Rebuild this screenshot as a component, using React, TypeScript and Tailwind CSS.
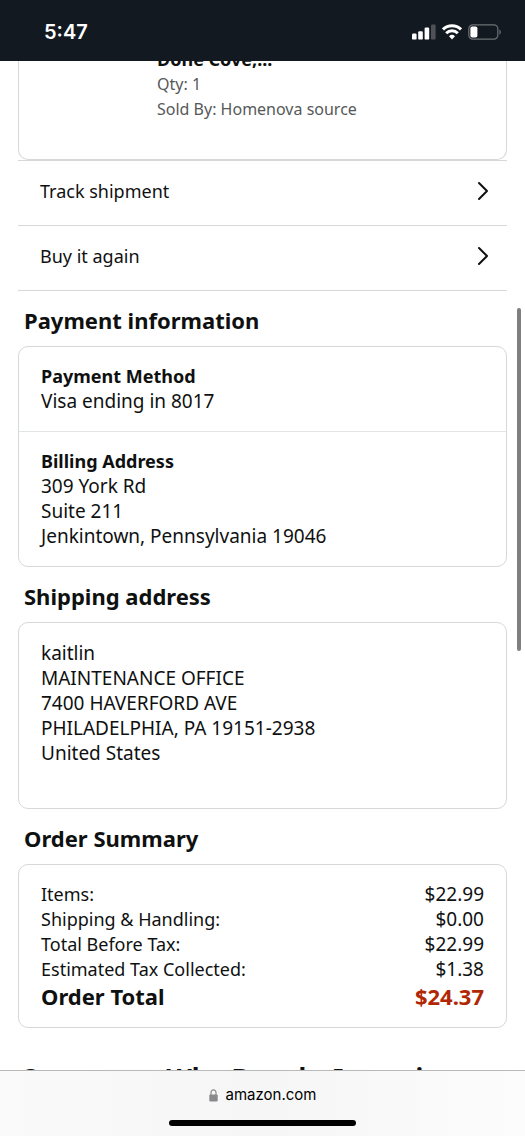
import React from "react";

type RowLinkProps = {
  label: string;
};

type CardProps = {
  title: string;
  children: React.ReactNode;
};

const charges = [
  { label: "Items:", amount: "$22.99" },
  { label: "Shipping & Handling:", amount: "$0.00" },
  { label: "Total Before Tax:", amount: "$22.99" },
  { label: "Estimated Tax Collected:", amount: "$1.38" },
];

const StatusBar = () => (
  <header className="flex h-[61px] shrink-0 items-center justify-between bg-[#131921] pt-0.5 pr-[23px] pl-11 font-['Inter',sans-serif] text-white">
    <span className="text-xl leading-6 font-semibold">5:47</span>
    <div className="flex items-center gap-1.5">
      <svg width="24" height="16" viewBox="0 0 24 16" fill="currentColor">
        <rect x="0" y="9.6" width="4.6" height="6" rx="1.2" />
        <rect x="6.2" y="7.2" width="4.6" height="8.4" rx="1.2" />
        <rect x="12.6" y="3.6" width="4.6" height="12" rx="1.2" />
        <rect x="19" y="0.5" width="4.6" height="15.1" rx="1.2" opacity="0.25" />
      </svg>
      <svg width="20" height="16" viewBox="0 0 20 16" fill="none" stroke="currentColor" strokeWidth="3">
        <path d="M1 5.4a12.8 12.8 0 0 1 18 0" />
        <path d="M4.2 9.2a8.2 8.2 0 0 1 11.6 0" />
        <path d="M10 15.4 7 12.3a4.3 4.3 0 0 1 6 0z" fill="currentColor" stroke="none" />
      </svg>
      <svg width="34" height="16" viewBox="0 0 34 16" fill="none">
        <rect x="0.8" y="0.8" width="29" height="14.4" rx="4" stroke="#6d7176" strokeWidth="1.2" />
        <rect x="2.4" y="2.4" width="7" height="11.2" rx="1.8" fill="white" />
        <path d="M31.4 5.4c1.8.7 1.8 4.5 0 5.2z" fill="#6d7176" />
      </svg>
    </div>
  </header>
);

const RowLink = ({ label }: RowLinkProps) => (
  <li className="border-b border-[#d5d9d9]">
    <a href="#" className="flex h-16 items-center justify-between pr-[18px] pb-1 pl-[22px]">
      <span>{label}</span>
      <svg width="12" height="20" viewBox="0 0 12 20" fill="none" stroke="#0f1111" strokeWidth="2">
        <path d="M2 2 10 10 2 18" strokeLinecap="round" strokeLinejoin="round" />
      </svg>
    </a>
  </li>
);

const Card = ({ title, children }: CardProps) => (
  <section>
    <h2 className="px-1.5 pt-[15px] pb-3 text-[22px] leading-7 font-bold">{title}</h2>
    <div className="divide-y divide-[#e3e6e6] rounded-[10px] border border-[#d5d9d9]">{children}</div>
  </section>
);

const App = () => {
  return (
    <div className="flex h-screen flex-col bg-white font-['Noto_Sans',sans-serif] text-lg leading-[25px] text-[#0f1111]">
      <StatusBar />

      <main className="relative min-h-0 flex-1 overflow-hidden px-[18px]">
        {/* item card, scrolled partly under the status bar */}
        <div className="-mt-4 rounded-b-[10px] border border-t-0 border-[#d5d9d9] pt-0.5 pb-[37px] pl-[138px] text-base leading-[25px] text-[#565959]">
          <p className="text-lg leading-[25px] font-bold text-[#0f1111]">Done Cove,...</p>
          <p>Qty: 1</p>
          <p>Sold By: Homenova source</p>
        </div>

        <ul className="border-t border-[#d5d9d9]">
          <RowLink label="Track shipment" />
          <RowLink label="Buy it again" />
        </ul>

        <Card title="Payment information">
          <div className="px-[22px] py-[17px] text-[19px] leading-[25px]">
            <h3 className="text-lg leading-[25px] font-bold">Payment Method</h3>
            <p>Visa ending in 8017</p>
          </div>
          <div className="px-[22px] py-[17px] text-[19px] leading-[25px]">
            <h3 className="text-lg leading-[25px] font-bold">Billing Address</h3>
            <p>309 York Rd</p>
            <p>Suite 211</p>
            <p>Jenkintown, Pennsylvania 19046</p>
          </div>
        </Card>

        <Card title="Shipping address">
          <address className="px-[22px] pt-[18px] pb-[42px] text-[19px] leading-[25px] not-italic">
            <p>kaitlin</p>
            <p>MAINTENANCE OFFICE</p>
            <p>7400 HAVERFORD AVE</p>
            <p>PHILADELPHIA, PA 19151-2938</p>
            <p>United States</p>
          </address>
        </Card>

        <Card title="Order Summary">
          <div className="px-[22px] py-[17px]">
            <table className="w-full">
              <tbody>
                {charges.map((charge) => (
                  <tr key={charge.label}>
                    <th className="p-0 text-left font-normal">{charge.label}</th>
                    <td className="p-0 text-right text-[19px] leading-[25px]">{charge.amount}</td>
                  </tr>
                ))}
                <tr className="text-[22px] leading-7 font-bold">
                  <th className="p-0 text-left">Order Total</th>
                  <td className="p-0 text-right text-[#b12704]">$24.37</td>
                </tr>
              </tbody>
            </table>
          </div>
        </Card>

        <h2 className="pt-[34px] pl-0.5 text-[26px] leading-8 font-bold whitespace-nowrap">Customers Who Bought Items in</h2>

        {/* scroll thumb */}
        <div className="absolute top-[247px] right-1 h-[343px] w-1 rounded-full bg-[#7f7f7f]" />
      </main>

      <footer className="flex h-[66px] shrink-0 flex-col items-center justify-between border-t border-[#b9b9b9] bg-linear-to-r from-[#fafafa] via-[#f6f6f6] to-[#fcfcfc] pt-3 pb-2.5 font-['Inter',sans-serif]">
        <button className="flex items-center gap-2 text-[15px] leading-6 text-black">
          <svg width="9" height="13" viewBox="0 0 9 13">
            <path d="M2 6V3.4a2.5 2.5 0 0 1 5 0V6" fill="none" stroke="#8a8a8d" strokeWidth="1.2" />
            <rect x="0.3" y="5.4" width="8.4" height="7" rx="1.2" fill="#8a8a8d" />
          </svg>
          amazon.com
        </button>
        <div className="h-1.5 w-[187px] rounded-full bg-black" />
      </footer>
    </div>
  );
};

export default App;
